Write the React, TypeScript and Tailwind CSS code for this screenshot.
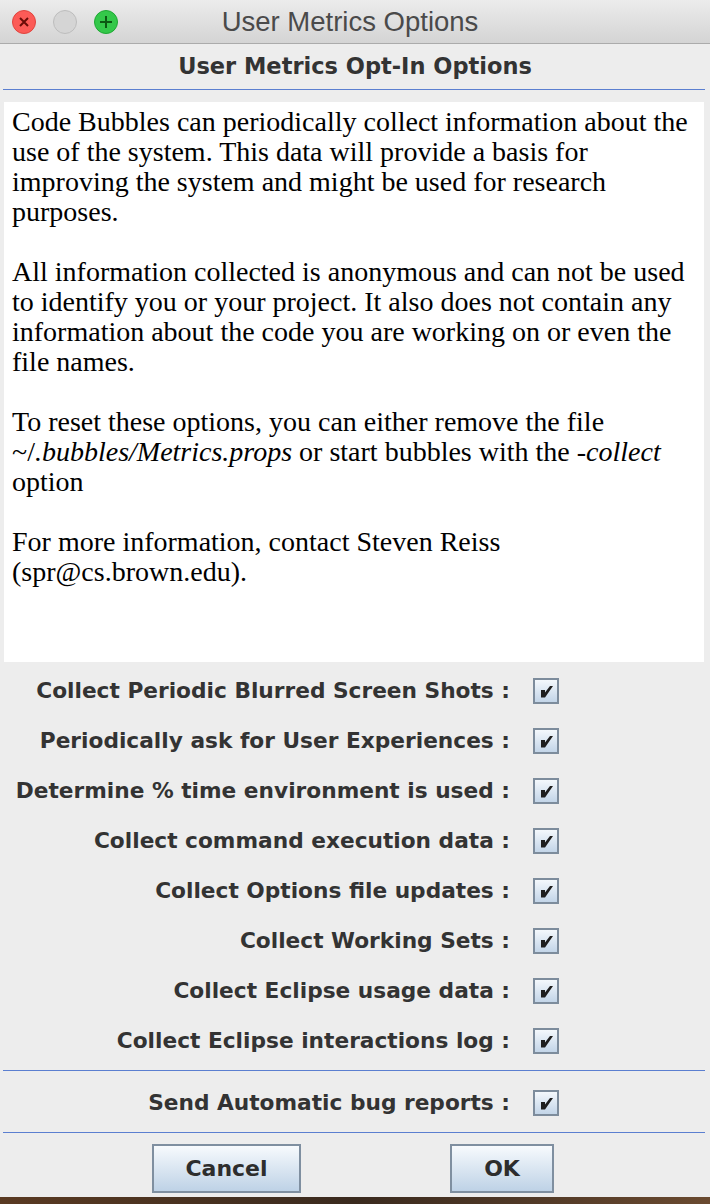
import React from "react";

const labels = [
  "Collect Periodic Blurred Screen Shots :",
  "Periodically ask for User Experiences :",
  "Determine % time environment is used :",
  "Collect command execution data :",
  "Collect Options file updates :",
  "Collect Working Sets :",
  "Collect Eclipse usage data :",
  "Collect Eclipse interactions log :",
];

function Check() {
  return (
    <div className="w-[26px] h-[26px] border-2 border-[#7d8c9c] bg-gradient-to-b from-[#f4f8fc] to-[#c3d5e8] flex items-center justify-center">
      <svg width="16" height="16" viewBox="0 0 16 16">
        <path d="M3 7 L7 7 L7 9.5 L12 3 L15 3 L7 14.5 L3 14.5 Z" fill="#1e1e1e" />
      </svg>
    </div>
  );
}

function Row({ label }: { label: string }) {
  return (
    <div className="h-[50px] flex items-center">
      <div className="w-[512px] text-right pr-[2px] text-[21.7px] font-bold text-[#333] whitespace-nowrap" style={{ fontFamily: '"DejaVu Sans", sans-serif' }}>
        {label}
      </div>
      <div className="ml-[21px]">
        <Check />
      </div>
    </div>
  );
}

function Btn({ children, w }: { children: React.ReactNode; w: string }) {
  return (
    <div className={`${w} h-[49px] border-2 border-[#7f8fa0] bg-gradient-to-b from-[#f7fafd] to-[#bed2e6] flex items-center justify-center text-[22px] font-bold text-[#2d2d2d]`} style={{ fontFamily: '"DejaVu Sans", sans-serif' }}>
      {children}
    </div>
  );
}

export default function App() {
  return (
    <div className="w-[710px] h-[1204px] bg-[#ededed] flex flex-col overflow-hidden">
      <div className="h-[44px] shrink-0 bg-gradient-to-b from-[#ececec] to-[#d4d4d4] border-b border-[#ababab] relative flex items-center justify-center">
        <div className="absolute left-[12px] top-[10px] flex gap-[17px]">
          <div className="w-[24px] h-[24px] rounded-full bg-[#fc5b57] border border-[#e0443e] flex items-center justify-center">
            <svg width="12" height="12" viewBox="0 0 12 12"><path d="M2 2 L10 10 M10 2 L2 10" stroke="#6b0c08" strokeWidth="2" /></svg>
          </div>
          <div className="w-[24px] h-[24px] rounded-full bg-[#d5d5d5] border border-[#bdbdbd]" />
          <div className="w-[24px] h-[24px] rounded-full bg-[#34c84a] border border-[#1fa834] flex items-center justify-center">
            <svg width="14" height="14" viewBox="0 0 14 14"><path d="M7 1 L7 13 M1 7 L13 7" stroke="#0b5a13" strokeWidth="2" /></svg>
          </div>
        </div>
        <div className="text-[27.5px] text-[#4a4a4a] mr-[10px]" style={{ fontFamily: '"Liberation Sans", Arial, sans-serif' }}>User Metrics Options</div>
      </div>
      <div className="h-[45px] shrink-0 flex items-center justify-center text-[22.5px] font-bold text-[#333]" style={{ fontFamily: '"DejaVu Sans", sans-serif' }}>
        User Metrics Opt-In Options
      </div>
      <div className="mx-[3px] w-[702px] h-px bg-[#5b7fd0]" />
      <div className="mt-[12px] ml-[4px] w-[700px] h-[560px] bg-white pl-[8px] pt-[5px] text-[28px] leading-[30px] text-black" style={{ fontFamily: '"Liberation Serif", "Times New Roman", serif' }}>
        <p>Code Bubbles can periodically collect information about the<br />use of the system. This data will provide a basis for<br />improving the system and might be used for research<br />purposes.</p>
        <p className="mt-[30px]">All information collected is anonymous and can not be used<br />to identify you or your project. It also does not contain any<br />information about the code you are working on or even the<br />file names.</p>
        <p className="mt-[30px]">To reset these options, you can either remove the file<br />~/<i>.bubbles/Metrics.props</i> or start bubbles with the <i>-collect</i><br />option</p>
        <p className="mt-[30px]">For more information, contact Steven Reiss<br />(spr@cs.brown.edu).</p>
      </div>
      <div className="mt-[4px] flex flex-col">
        {labels.map((l) => (
          <Row key={l} label={l} />
        ))}
      </div>
      <div className="mt-[4px] mx-[3px] w-[702px] h-px bg-[#5b7fd0]" />
      <div className="mt-[7px]">
        <Row label="Send Automatic bug reports :" />
      </div>
      <div className="mt-[4px] mx-[3px] w-[702px] h-px bg-[#5b7fd0]" />
      <div className="mt-[11px] flex">
        <div className="ml-[152px]"><Btn w="w-[149px]">Cancel</Btn></div>
        <div className="ml-[149px]"><Btn w="w-[104px]">OK</Btn></div>
      </div>
      <div className="mt-auto h-[7px] bg-gradient-to-r from-[#5a3a22] via-[#3a2a1e] to-[#6a4a30]" />
    </div>
  );
}
